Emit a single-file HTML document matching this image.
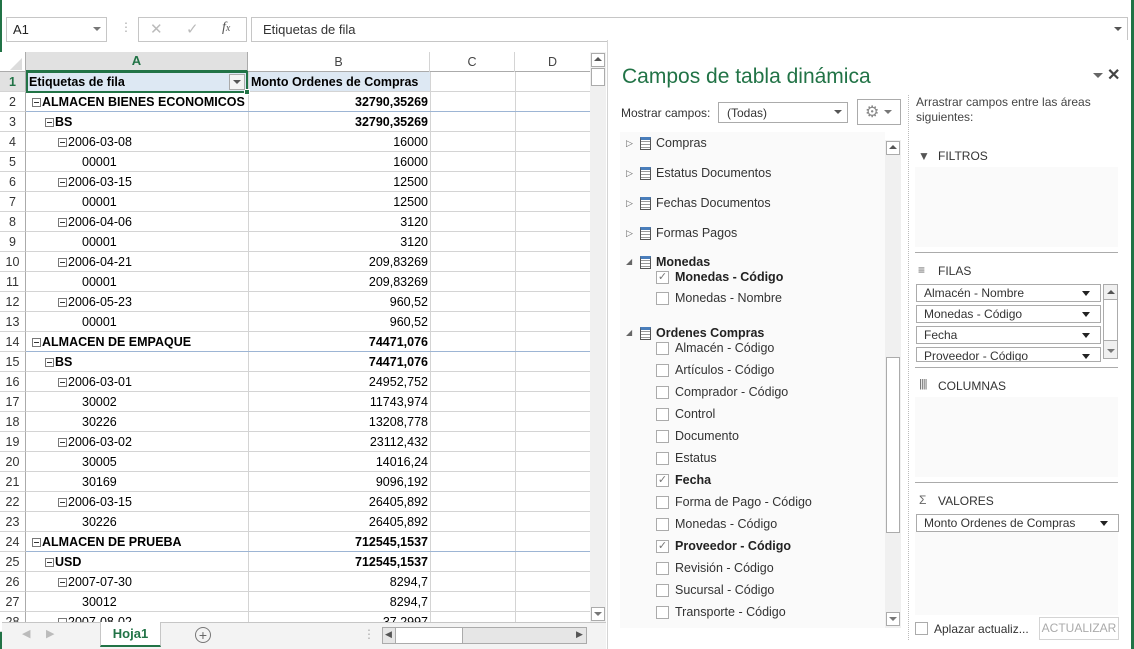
<!DOCTYPE html><html><head><meta charset="utf-8"><style>
*{margin:0;padding:0;box-sizing:border-box}
body{width:1134px;height:649px;overflow:hidden;background:#fff;font-family:"Liberation Sans",Arial,sans-serif;font-size:12px;color:#222;position:relative}
.a{position:absolute}
.t{position:absolute;white-space:nowrap}
.cell{position:absolute;height:20px;line-height:20px;font-size:12.5px;color:#000;white-space:nowrap}
.rh{position:absolute;left:0;width:26px;height:20px;line-height:20px;text-align:center;color:#333;background:#fff;border-right:1px solid #ababab;border-bottom:1px solid #d4d4d4;font-size:12.5px}
.hl{position:absolute;left:26px;width:564px;height:1px;background:#d4d4d4}
.box{position:absolute;width:9px;height:9px;border:1px solid #777;background:#fff}
.box:after{content:"";position:absolute;left:1px;top:3px;width:5px;height:1px;background:#333}
.chk{position:absolute;width:13px;height:13px;border:1px solid #ababab;background:#fff;left:656px}
.it{position:absolute;left:675px;font-size:12.5px;color:#333;white-space:nowrap}
.tbl{position:absolute;left:640px;width:11px;height:13px;border:1px solid #555;border-top:3px solid #4a7ebb;background:repeating-linear-gradient(#fff 0 1px,#999 1px 2px,#fff 2px 3px)}
.tri{position:absolute;left:626px;font-size:9px;color:#666}
.fld{position:absolute;left:916px;height:18px;border:1px solid #ababab;background:#fff;font-size:12px;line-height:16px;padding-left:7px;color:#333}
.fld:after{content:"";position:absolute;right:10px;top:6px;border:4px solid transparent;border-top:5px solid #222}
</style></head><body>
<div class="a" style="left:0;top:0;width:2px;height:649px;background:#217346"></div>
<div class="a" style="left:1131px;top:0;width:3px;height:649px;background:#217346"></div>
<!-- formula bar -->
<div class="a" style="left:6px;top:17px;width:101px;height:25px;border:1px solid #c6c6c6"></div>
<div class="t" style="left:13px;top:22px;font-size:13px">A1</div>
<div class="a" style="left:93px;top:27px;border:4px solid transparent;border-top:4px solid #777"></div>
<div class="t" style="left:120px;top:20px;color:#aaa">⋮</div>
<div class="a" style="left:138px;top:17px;width:109px;height:25px;border:1px solid #c6c6c6"></div>
<div class="t" style="left:150px;top:20px;color:#bbb;font-size:15px">✕</div>
<div class="t" style="left:186px;top:20px;color:#bbb;font-size:15px">✓</div>
<div class="t" style="left:222px;top:20px;color:#555;font-style:italic;font-family:'Liberation Serif',serif;font-size:14px">f<span style="font-size:10px">x</span></div>
<div class="a" style="left:251px;top:17px;width:877px;height:25px;border:1px solid #c6c6c6"></div>
<div class="t" style="left:263px;top:22px;font-size:13px;color:#333">Etiquetas de fila</div>
<div class="a" style="left:1114px;top:27px;border:4px solid transparent;border-top:4px solid #555"></div>
<!-- column headers -->
<div class="a" style="left:0;top:52px;width:590px;height:20px;background:#fff;border-bottom:1px solid #ababab"></div>
<div class="a" style="left:0;top:52px;width:26px;height:20px;border-right:1px solid #ababab"></div>
<div class="a" style="left:10px;top:58px;border-left:12px solid transparent;border-bottom:12px solid #dcdcdc"></div>
<div class="a" style="left:26px;top:52px;width:222px;height:20px;background:#e1e1e1;border-bottom:2px solid #217346;border-right:1px solid #ababab;text-align:center;line-height:18px;color:#217346;font-weight:bold;font-size:13px">A</div>
<div class="a" style="left:248px;top:52px;width:182px;height:20px;border-right:1px solid #d4d4d4;text-align:center;line-height:20px;color:#444;font-size:12.5px">B</div>
<div class="a" style="left:430px;top:52px;width:85px;height:20px;border-right:1px solid #d4d4d4;text-align:center;line-height:20px;color:#444;font-size:12.5px">C</div>
<div class="a" style="left:515px;top:52px;width:75px;height:20px;text-align:center;line-height:20px;color:#444;font-size:12.5px">D</div>
<!-- grid -->
<div class="a" style="left:26px;top:72px;width:404px;height:20px;background:#dde8f3"></div>
<div class="a" style="left:248px;top:72px;width:1px;height:550px;background:#d4d4d4"></div>
<div class="a" style="left:430px;top:72px;width:1px;height:550px;background:#d4d4d4"></div>
<div class="a" style="left:515px;top:72px;width:1px;height:550px;background:#d4d4d4"></div>
<div id="g"></div>
<div class="a" style="left:26px;top:71px;width:222px;height:22px;border:2px solid #217346"></div>
<div class="a" style="left:244px;top:89px;width:6px;height:6px;background:#217346;border:1px solid #fff"></div>
<div class="a" style="left:229px;top:74px;width:16px;height:16px;border:1px solid #aaa;background:#f3f3f3"></div>
<div class="a" style="left:233px;top:80px;border:4px solid transparent;border-top:4px solid #555"></div>
<!-- vscroll -->
<div class="a" style="left:590px;top:52px;width:16px;height:570px;background:#f0f0f0"></div>
<div class="a" style="left:591px;top:53px;width:14px;height:14px;background:#fff;border:1px solid #ababab"></div>
<div class="a" style="left:594px;top:57px;border:4px solid transparent;border-bottom:4px solid #555;border-top:0"></div>
<div class="a" style="left:591px;top:68px;width:14px;height:18px;background:#fff;border:1px solid #ababab"></div>
<div class="a" style="left:591px;top:607px;width:14px;height:14px;background:#fff;border:1px solid #ababab"></div>
<div class="a" style="left:594px;top:612px;border:4px solid transparent;border-top:4px solid #777"></div>
<!-- sheet tab bar -->
<div class="a" style="left:2px;top:622px;width:604px;height:27px;background:#f3f3f3;border-top:1px solid #c6c6c6"></div>
<div class="t" style="left:22px;top:627px;color:#bbb;font-size:11px">◀</div>
<div class="t" style="left:46px;top:627px;color:#bbb;font-size:11px">▶</div>
<div class="a" style="left:86px;top:622px;width:50px;height:25px;background:#fff;border-bottom:2px solid #217346;border-left:1px solid #c6c6c6;border-right:1px solid #c6c6c6;text-align:center;line-height:24px;color:#217346;font-weight:bold;font-size:13px;left:100px;width:61px">Hoja1</div>
<div class="a" style="left:194px;top:627px;width:16px;height:16px;border:1px solid #777;border-radius:50%;text-align:center;line-height:14px;color:#666;font-size:14px;left:195px">+</div>
<div class="t" style="left:363px;top:627px;color:#aaa">⋮</div>
<div class="a" style="left:382px;top:627px;width:205px;height:17px;border:1px solid #ababab;background:#e6e6e6"></div>
<div class="a" style="left:395px;top:628px;width:68px;height:15px;background:#fff;border-right:1px solid #ababab;border-left:1px solid #ababab"></div>
<div class="t" style="left:385px;top:629px;font-size:9px;color:#555">◀</div>
<div class="t" style="left:576px;top:629px;font-size:9px;color:#555">▶</div>
<!-- pane -->
<div class="a" style="left:607px;top:40px;width:524px;height:609px;background:#fff;border-left:1px solid #d4d4d4"></div>
<div class="t" style="left:622px;top:65px;font-size:21px;color:#217346">Campos de tabla dinámica</div>
<div class="a" style="left:1093px;top:73px;border:5px solid transparent;border-top:5px solid #666"></div>
<div class="t" style="left:1107px;top:65px;font-size:16px;color:#444;font-weight:bold">✕</div>
<div class="t" style="left:621px;top:106px;color:#333">Mostrar campos:</div>
<div class="a" style="left:718px;top:102px;width:130px;height:21px;border:1px solid #ababab"></div>
<div class="t" style="left:727px;top:106px;color:#333">(Todas)</div>
<div class="a" style="left:834px;top:110px;border:4px solid transparent;border-top:4px solid #555"></div>
<div class="a" style="left:857px;top:99px;width:44px;height:26px;border:1px solid #ababab"></div>
<div class="t" style="left:865px;top:102px;color:#888;font-size:16px">⚙</div>
<div class="a" style="left:884px;top:110px;border:4px solid transparent;border-top:4px solid #777"></div>
<div class="a" style="left:620px;top:132px;width:265px;height:496px;background:#fafafa"></div>
<div class="a" style="left:885px;top:140px;width:16px;height:488px;background:#f0f0f0"></div>
<div class="a" style="left:886px;top:141px;width:14px;height:14px;background:#fff;border:1px solid #ababab"></div>
<div class="a" style="left:889px;top:145px;border:4px solid transparent;border-bottom:4px solid #555;border-top:0"></div>
<div class="a" style="left:886px;top:357px;width:14px;height:176px;background:#fff;border:1px solid #ababab"></div>
<div class="a" style="left:886px;top:612px;width:14px;height:14px;background:#fff;border:1px solid #ababab"></div>
<div class="a" style="left:889px;top:617px;border:4px solid transparent;border-top:4px solid #777"></div>
<div class="a" style="left:908px;top:95px;width:0;height:545px;border-left:1px dotted #bbb"></div>
<div id="f"></div>
<div class="t" style="left:916px;top:95px;color:#444;line-height:15px">Arrastrar campos entre las áreas<br>siguientes:</div>
<div class="t" style="left:918px;top:149px;color:#555;font-size:12px">▼</div>
<div class="t" style="left:938px;top:149px;color:#333">FILTROS</div>
<div class="a" style="left:915px;top:167px;width:203px;height:80px;background:#fafafa"></div>
<div class="a" style="left:915px;top:252px;width:203px;height:1px;background:#ababab"></div>
<div class="t" style="left:918px;top:263px;color:#666">≡</div>
<div class="t" style="left:938px;top:264px;color:#333">FILAS</div>
<div class="fld" style="top:284px;width:185px">Almacén - Nombre</div>
<div class="fld" style="top:305px;width:185px">Monedas - Código</div>
<div class="fld" style="top:326px;width:185px">Fecha</div>
<div class="fld" style="top:347px;width:185px;height:15px;overflow:hidden">Proveedor - Código</div>
<div class="a" style="left:1103px;top:284px;width:15px;height:75px;background:#f0f0f0;border:1px solid #ababab"></div>
<div class="a" style="left:1103px;top:299px;width:15px;height:42px;background:#fff;border:1px solid #ababab"></div>
<div class="a" style="left:1107px;top:290px;border:4px solid transparent;border-bottom:4px solid #555;border-top:0"></div>
<div class="a" style="left:1107px;top:349px;border:4px solid transparent;border-top:4px solid #777"></div>
<div class="a" style="left:915px;top:367px;width:203px;height:1px;background:#ababab"></div>
<div class="t" style="left:919px;top:378px;color:#666;letter-spacing:-1px;font-size:11px">||||</div>
<div class="t" style="left:938px;top:379px;color:#333">COLUMNAS</div>
<div class="a" style="left:915px;top:397px;width:203px;height:80px;background:#fafafa"></div>
<div class="a" style="left:915px;top:482px;width:203px;height:1px;background:#ababab"></div>
<div class="t" style="left:919px;top:493px;color:#666">Σ</div>
<div class="t" style="left:938px;top:494px;color:#333">VALORES</div>
<div class="a" style="left:915px;top:532px;width:203px;height:83px;background:#fafafa"></div>
<div class="fld" style="top:514px;width:203px">Monto Ordenes de Compras</div>
<div class="a" style="left:915px;top:622px;width:13px;height:13px;border:1px solid #ababab"></div>
<div class="t" style="left:934px;top:622px;color:#333">Aplazar actualiz...</div>
<div class="a" style="left:1039px;top:617px;width:80px;height:23px;border:1px solid #d4d4d4;text-align:center;line-height:21px;color:#aaa;font-size:12px">ACTUALIZAR</div>
<script>
var rows=[["Etiquetas de fila","Monto Ordenes de Compras",-1],
["ALMACEN BIENES ECONOMICOS","32790,35269",0],["BS","32790,35269",1],["2006-03-08","16000",2],["00001","16000",3],["2006-03-15","12500",2],["00001","12500",3],["2006-04-06","3120",2],["00001","3120",3],["2006-04-21","209,83269",2],["00001","209,83269",3],["2006-05-23","960,52",2],["00001","960,52",3],
["ALMACEN DE EMPAQUE","74471,076",0],["BS","74471,076",1],["2006-03-01","24952,752",2],["30002","11743,974",3],["30226","13208,778",3],["2006-03-02","23112,432",2],["30005","14016,24",3],["30169","9096,192",3],["2006-03-15","26405,892",2],["30226","26405,892",3],
["ALMACEN DE PRUEBA","712545,1537",0],["USD","712545,1537",1],["2007-07-30","8294,7",2],["30012","8294,7",3],["2007-08-02","37,2997",2]];
var h="";
rows.forEach(function(r,i){var y=72+i*20;var lv=r[2];var b=(lv<=1)?"font-weight:bold;":"";
h+='<div class="rh" style="top:'+y+'px;'+(i==0?'background:#e1e1e1;color:#217346;font-weight:bold;':'')+'">'+(i+1)+'</div>';
h+='<div class="hl" style="top:'+(y+19)+'px;'+(lv==0?'background:#9db5d4;':'')+'"></div>';
if(lv==-1){h+='<div class="cell" style="left:29px;top:'+y+'px;font-weight:bold">'+r[0]+'</div><div class="cell" style="left:251px;top:'+y+'px;font-weight:bold">'+r[1]+'</div>';}
else{var x=[32,45,58,82][lv];
if(lv<3)h+='<div class="box" style="left:'+x+'px;top:'+(y+6)+'px"></div>',x+=10;
h+='<div class="cell" style="left:'+x+'px;top:'+y+'px;'+b+'">'+r[0]+'</div><div class="cell" style="left:250px;width:178px;text-align:right;top:'+y+'px;'+b+'">'+r[1]+'</div>';}
});
document.getElementById("g").innerHTML=h;
var f="";
[["Compras",135],["Estatus Documentos",165],["Fechas Documentos",195],["Formas Pagos",225]].forEach(function(a){f+='<div class="tri" style="top:'+(a[1]+3)+'px">▷</div><div class="tbl" style="top:'+(a[1]+2)+'px"></div><div class="t" style="left:656px;top:'+(a[1]+1)+'px;color:#333;font-size:12.5px">'+a[0]+'</div>';});
[["Monedas",255],["Ordenes Compras",326]].forEach(function(a){f+='<div class="tri" style="top:'+(a[1]+2)+'px;font-size:8px">◢</div><div class="tbl" style="top:'+(a[1]+1)+'px"></div><div class="t" style="left:656px;top:'+(a[1])+'px;color:#222;font-weight:bold;font-size:12.5px">'+a[0]+'</div>';});
var its=[["Monedas - Código",278,1],["Monedas - Nombre",299,0],["Almacén - Código",349,0],["Artículos - Código",371,0],["Comprador - Código",393,0],["Control",415,0],["Documento",437,0],["Estatus",459,0],["Fecha",481,1],["Forma de Pago - Código",503,0],["Monedas - Código",525,0],["Proveedor - Código",547,1],["Revisión - Código",569,0],["Sucursal - Código",591,0],["Transporte - Código",613,0]];
its.forEach(function(a){f+='<div class="chk" style="top:'+(a[1]-7)+'px;text-align:center;line-height:11px;font-size:11px;color:#777">'+(a[2]?'✓':'')+'</div><div class="it" style="top:'+(a[1]-8)+'px;'+(a[2]?'font-weight:bold;color:#222':'')+'">'+a[0]+'</div>';});
document.getElementById("f").innerHTML=f;
</script>
</body></html>
